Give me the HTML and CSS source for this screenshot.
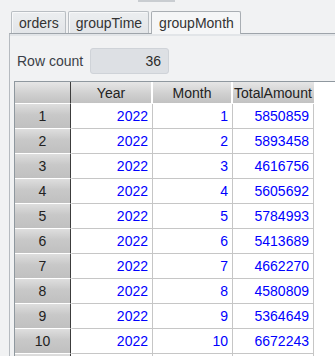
FILE: index.html
```html
<!DOCTYPE html>
<html lang="en">
<head>
  <meta charset="UTF-8">
  <title>groupMonth</title>
  <link rel="stylesheet" href="styles.css">
</head>
<body>

<!-- Top strip -->
<div class="top-strip">
  <div class="top-handle"></div>
</div>

<!-- Sheet tabs -->
<div class="tabs">
  <div class="tab">orders</div>
  <div class="tab">groupTime</div>
  <div class="tab active">groupMonth</div>
  <div class="tab-rest"></div>
</div>

<div class="panel">
  <div class="count-row">
    <span class="count-label">Row count</span>
    <div class="count-box">36</div>
  </div>

  <div class="grid-wrap">
    <table class="grid">
      <thead>
        <tr>
          <th class="corner"></th>
          <th class="c-year">Year</th>
          <th class="c-month">Month</th>
          <th class="c-total">TotalAmount</th>
        </tr>
      </thead>
      <tbody id="rows"></tbody>
    </table>
  </div>
</div>

<script>
  const data = [
    [2022, 1, 5850859],
    [2022, 2, 5893458],
    [2022, 3, 4616756],
    [2022, 4, 5605692],
    [2022, 5, 5784993],
    [2022, 6, 5413689],
    [2022, 7, 4662270],
    [2022, 8, 4580809],
    [2022, 9, 5364649],
    [2022, 10, 6672243]
  ];

  const body = document.getElementById('rows');
  data.forEach((row, i) => {
    const tr = body.insertRow();
    tr.innerHTML = `
      <td class="row-head">${i + 1}</td>
      <td>${row[0]}</td>
      <td>${row[1]}</td>
      <td>${row[2]}</td>
    `;
  });

  // next row only peeks in at the bottom edge
  const more = body.insertRow();
  more.innerHTML = '<td class="row-head"></td><td></td><td></td><td></td>';
</script>

</body>
</html>
```

FILE: styles.css
```css
body {
  margin: 0;
  background-color: #f1f2f3;
  font-family: "Liberation Sans", Arial, sans-serif;
  font-size: 14px;
  color: #2b2b2b;
  overflow: hidden;
}

.top-strip {
  height: 10px;
}

.top-handle {
  margin-left: 138px;
  width: 37px;
  height: 2px;
  background-color: #c9cdd1;
}

/* Tabs */
.tabs {
  display: flex;
  align-items: flex-end;
  padding-left: 11px;
  gap: 2px;
  height: 23px;
}

.tab {
  height: 21px;
  line-height: 22px;
  padding: 0 6px 0 7px;
  border: 1px solid #b9bec3;
  border-bottom: none;
  border-radius: 2px 2px 0 0;
  background: linear-gradient(#eceef0, #e2e5e8);
  color: #333;
  box-shadow: inset 1px 1px 0 #f7f8f9;
}

.tab.active {
  background: #f5f6f7;
  height: 22px;
  margin-bottom: -1px;
  position: relative;
  z-index: 1;
  box-shadow: none;
  border-color: #a9aeb3;
}

.tab-rest {
  flex: 1;
}

/* Panel under tabs */
.panel {
  margin-left: 9px;
  border-top: 1px solid #9ea4aa;
  border-left: 1px solid #b6bbc0;
  box-shadow: inset 0 2px 0 #e2e5e8;
  height: 400px;
}

.count-row {
  display: flex;
  align-items: center;
  padding: 14px 0 0 7px;
  height: 26px;
}

.count-label {
  width: 73px;
  color: #3a3f47;
}

.count-box {
  width: 70px;
  height: 24px;
  line-height: 25px;
  padding-right: 7px;
  text-align: right;
  background-color: #dde0e4;
  border: 1px solid #cfd3d8;
  border-radius: 3px;
  color: #2b2b2b;
}

/* Table */
.grid-wrap {
  margin: 7px 0 0 4px;
  background-color: #fff;
  border-top: 1px solid #8f989f;
  border-left: 1px solid #8f989f;
  height: 300px;
}

.grid {
  border-collapse: separate;
  border-spacing: 0;
  table-layout: fixed;
  width: 298px;
}

.grid th {
  height: 21px;
  padding: 0;
  font-weight: normal;
  color: #222;
  text-align: center;
  white-space: nowrap;
  overflow: hidden;
  background: linear-gradient(#e6e6e6, #d0d0d0 55%, #c2c2c2);
  border-bottom: 1px solid #fff;
  border-right: 2px solid #fff;
}

.grid th.corner {
  width: 55px;
  border-right: 1px solid #3c3c3c;
}

.grid th.c-year {
  width: 80px;
}

.grid th.c-month {
  width: 78px;
}

.grid th.c-total {
  width: 80px;
  border-right: none;
  text-align: left;
  padding-left: 1px;
}

.grid td {
  height: 24px;
  padding: 0 4px 0 0;
  text-align: right;
  color: #0000ff;
  border-bottom: 1px solid #c6c6c6;
  border-right: 1px solid #c6c6c6;
  white-space: nowrap;
}

.grid td.row-head {
  padding: 0;
  text-align: center;
  color: #222;
  background: linear-gradient(#dedede, #c8c8c8 45%, #c0c0c0);
  border-bottom: 1px solid #fff;
  border-right: 1px solid #3c3c3c;
}

.grid td:nth-child(2) {
  border-left: 1px solid #fff;
}
```
